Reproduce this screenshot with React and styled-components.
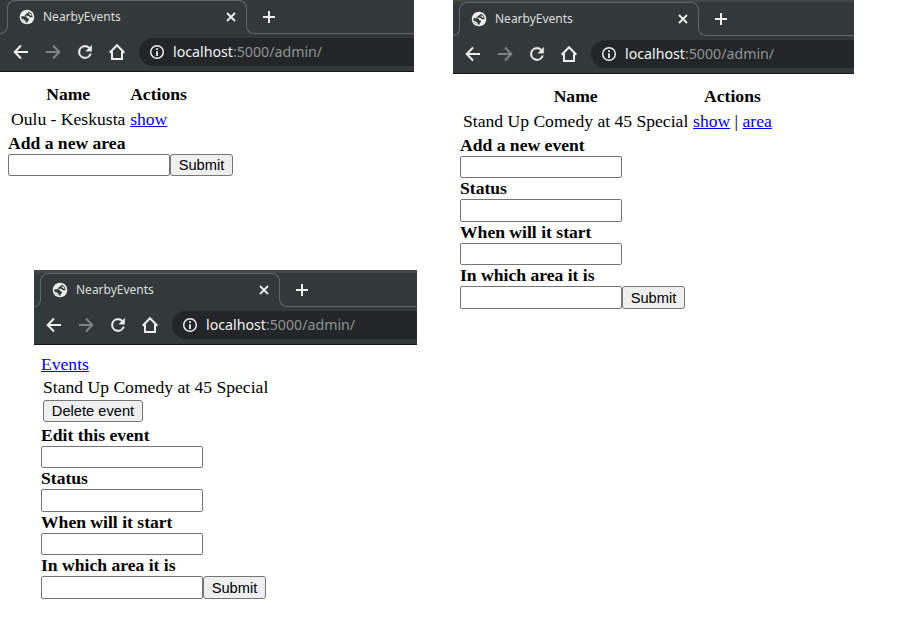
import React from "react";
import styled, { createGlobalStyle } from "styled-components";

const GlobalStyle = createGlobalStyle`
  * { box-sizing: border-box; }
  body { margin: 0; background: #fff; }
`;

const Board = styled.main`
  width: 903px;
  height: 633px;
  display: flex;
  align-items: flex-start;
  gap: 36px;
  overflow: hidden;
  background: #fff;
  color: #000;
  font-family: "Liberation Serif", "Times New Roman", serif;
  font-size: 17.6px;
`;

const Column = styled.div`
  display: flex;
  flex-direction: column;
  width: ${(p) => p.$width}px;
`;

const Window = styled.section`
  width: ${(p) => p.$width}px;
  margin-left: ${(p) => p.$left || 0}px;
  height: ${(p) => p.$height}px;
`;

const Chrome = styled.header`
  display: flex;
  flex-direction: column;
  border-top: ${(p) => p.$strip}px solid #464645;
  border-bottom: 1px solid #16191b;
  background: #33393b;
  font-family: "Noto Sans", sans-serif;
  overflow: hidden;
`;

const TabStrip = styled.div`
  display: flex;
  align-items: flex-end;
  height: 34px;
`;

const LeftFoot = styled.div`
  width: ${(p) => p.$width}px;
  height: 11px;
  border-right: 1px solid #62686a;
  border-bottom: 1px solid #62686a;
  border-bottom-right-radius: 8px;
`;

const Tab = styled.div`
  align-self: flex-start;
  display: flex;
  align-items: center;
  width: 240px;
  height: 24px;
  margin: 0 -1px;
  padding: 9px 8px 0 11px;
  border: 1px solid #62686a;
  border-bottom: 0;
  border-radius: 8px 8px 0 0;
  color: #dcdedd;
  font-size: 12px;
  line-height: 16px;
  white-space: nowrap;
`;

const TabTitle = styled.span`
  flex: 1;
  margin-left: 8px;
`;

const RightFoot = styled.div`
  display: flex;
  flex: 1;
  height: 11px;
  border-left: 1px solid #62686a;
  border-bottom: 1px solid #62686a;
  border-bottom-left-radius: 8px;
`;

const NewTab = styled.div`
  margin: -14px 0 0 14px;
  width: 16px;
  height: 16px;
`;

const Toolbar = styled.div`
  display: flex;
  align-items: center;
  gap: 12px;
  height: 37px;
  padding: 0 0 1px ${(p) => p.$inset + 4}px;
`;

const Address = styled.div`
  display: flex;
  align-items: center;
  flex: 1;
  height: 28px;
  padding-left: 8px;
  border-radius: 14px 0 0 14px;
  background: #222629;
  color: #8e9293;
  font-size: 14.2px;
  line-height: 20px;
  white-space: nowrap;
`;

const Url = styled.span`
  margin-left: 6px;
`;

const Host = styled.span`
  color: #f2f2f2;
`;

const Icon = styled.svg`
  display: block;
  flex: none;
  width: ${(p) => p.$size || 20}px;
  height: ${(p) => p.$size || 20}px;
  fill: ${(p) => p.$color || "#eeeeec"};
`;

const Page = styled.div`
  padding: ${(p) => p.$top}px 0 0 ${(p) => p.$left}px;
`;

const Listing = styled.table`
  margin-bottom: 1px;
  border-spacing: 2.2px 2px;
  border-collapse: separate;
  white-space: nowrap;
  tr { height: 22.5px; }
  th, td { padding: 1px; line-height: 20px; }
  th + th, td + td { padding-left: 1.8px; }
`;

const Link = styled.a`
  color: #0000ee;
  text-decoration: underline;
`;

const Form = styled.form`
  display: flex;
  flex-direction: column;
`;

const Label = styled.label`
  height: 21px;
  font-weight: bold;
  line-height: 21px;
`;

const Field = styled.div`
  display: flex;
  height: 22.4px;
`;

const Input = styled.input`
  width: 162px;
  height: 22.4px;
  margin: 0;
  border: 1px solid #767676;
  border-radius: 2px;
  background: #fff;
`;

const Button = styled.button`
  width: ${(p) => p.$width || 63}px;
  height: 22.4px;
  margin: 0;
  padding: ${(p) => p.$drop || 0}px 0 0;
  border: 1px solid #767676;
  border-radius: 3px;
  background: #efefef;
  color: #000;
  font: 14.667px/20px "Liberation Sans", Arial, sans-serif;
  white-space: nowrap;
`;

const BackLink = styled(Link)`
  display: block;
  width: max-content;
  height: 20px;
  line-height: 20px;
`;

const Details = styled.div`
  display: flex;
  flex-direction: column;
  align-items: flex-start;
  height: 51px;
  padding: 3px 0 0 2px;
  line-height: 20px;
  gap: 3px;
`;

function BrowserChrome({ inset, strip }) {
  return (
    <Chrome $strip={strip}>
      <TabStrip>
        <LeftFoot $width={inset + 1} />
        <Tab>
          <Icon $size={16} viewBox="0 0 16 16">
            <circle cx="8" cy="8" r="7.3" />
            <path
              d="M2.300 7.300h3.800c1.500.300 2.300 1.200 2.200 2.300h1.600v1.600c-.900.200-1.300.800-1.300 2.400C5 13.800 2.100 11.300 2.300 7.300ZM9.600 2.400c.200 1-.500 1.700-1.300 1.800-1 .100-1.500.600-1.500 1.500H5.600v1h3.200c1 0 1.500.900 2.100 1.600h2.700C13.700 5.600 12 3.200 9.600 2.400Z"
              fill="#33393b"
            />
            <path d="M2.900 9.700c.800 0 1.500.300 2.200 1.100.500.600 1.100.800 1.600.900v1.500c-2-.500-3.300-1.700-3.800-3.500ZM10.600 4.100c1 .600 1.800 1.500 2.200 2.700h-1.300c-.300-.900-1.100-1.200-2-1.200Z" />
          </Icon>
          <TabTitle>NearbyEvents</TabTitle>
          <Icon $size={14} viewBox="0 0 14 14">
            <path d="m3 3 8 8M11 3l-8 8" stroke="#eeeeec" strokeWidth="1.8" />
          </Icon>
        </Tab>
        <RightFoot>
          <NewTab>
            <Icon $size={16} viewBox="0 0 16 16">
              <path d="M8 2v12M2 8h12" stroke="#eeeeec" strokeWidth="2" />
            </Icon>
          </NewTab>
        </RightFoot>
      </TabStrip>
      <Toolbar $inset={inset}>
        <Icon viewBox="0 0 20 20">
          <path d="M17 10H4M10 3.500 3.700 10 10 16.500" fill="none" stroke="#eeeeec" strokeWidth="2" />
        </Icon>
        <Icon viewBox="0 0 20 20">
          <path d="M3 10h13M10 3.500l6.300 6.500-6.300 6.500" fill="none" stroke="#808483" strokeWidth="2" />
        </Icon>
        <Icon viewBox="0 0 24 24">
          <path d="M17.650 6.350A7.960 7.960 0 0 0 12 4a8 8 0 1 0 7.730 10h-2.080A6 6 0 1 1 12 6c1.660 0 3.140.690 4.220 1.780L13 11h7V4z" stroke="#eeeeec" strokeWidth=".5" />
        </Icon>
        <Icon viewBox="0 0 20 20">
          <path d="M2.700 10.800 10 3.300l7.300 7.500M5 9.500V17h10V9.500" fill="none" stroke="#eeeeec" strokeWidth="2" />
        </Icon>
        <Address>
          <Icon viewBox="0 0 20 20">
            <circle cx="10" cy="10" r="6.300" fill="none" stroke="#eeeeec" strokeWidth="1.500" />
            <path d="M9.100 9.200h1.800V14H9.100zM9.100 6.200h1.800v1.800H9.100z" />
          </Icon>
          <Url>
            <Host>localhost</Host>:5000/admin/
          </Url>
        </Address>
      </Toolbar>
    </Chrome>
  );
}

function EntryForm({ labels }) {
  return (
    <Form>
      {labels.map((label, i) => (
        <React.Fragment key={label}>
          <Label>{label}</Label>
          <Field>
            <Input aria-label={label} />
            {i === labels.length - 1 && (
              <Button type="button" $drop={i > 0 ? 1 : 0}>Submit</Button>
            )}
          </Field>
        </React.Fragment>
      ))}
    </Form>
  );
}

function RecordTable({ name, actions }) {
  return (
    <Listing>
      <thead>
        <tr>
          <th>Name</th>
          <th>Actions</th>
        </tr>
      </thead>
      <tbody>
        <tr>
          <td>{name}</td>
          <td>
            {actions.map((action, i) => (
              <React.Fragment key={action}>
                {i > 0 && " | "}
                <Link href="#">{action}</Link>
              </React.Fragment>
            ))}
          </td>
        </tr>
      </tbody>
    </Listing>
  );
}

const eventFields = ["Status", "When will it start", "In which area it is"];

export default function App() {
  return (
    <>
      <GlobalStyle />
      <Board>
        <Column $width={417}>
          <Window $width={414} $height={270}>
            <BrowserChrome inset={7} strip={0} />
            <Page $left={8} $top={9}>
              <RecordTable name="Oulu - Keskusta" actions={["show"]} />
              <EntryForm labels={["Add a new area"]} />
            </Page>
          </Window>
          <Window $width={383} $left={34} $height={363}>
            <BrowserChrome inset={6} strip={3} />
            <Page $left={7} $top={9}>
              <BackLink href="#">Events</BackLink>
              <Details>
                <span>Stand Up Comedy at 45 Special</span>
                <Button type="button" $width={100}>Delete event</Button>
              </Details>
              <EntryForm labels={["Edit this event", ...eventFields]} />
            </Page>
          </Window>
        </Column>
        <Window $width={401} $height={633}>
          <BrowserChrome inset={6} strip={2} />
          <Page $left={7} $top={9}>
            <RecordTable name="Stand Up Comedy at 45 Special" actions={["show", "area"]} />
            <EntryForm labels={["Add a new event", ...eventFields]} />
          </Page>
        </Window>
      </Board>
    </>
  );
}
